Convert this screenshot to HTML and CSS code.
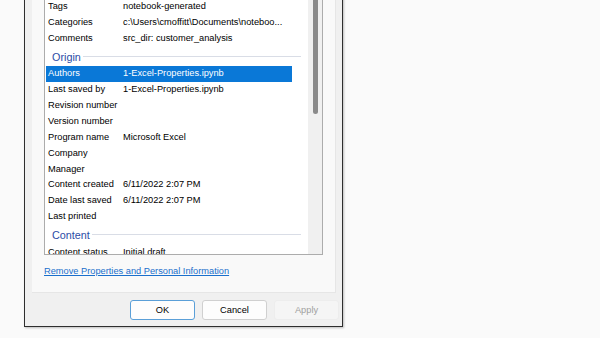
FILE: index.html
```html
<!DOCTYPE html>
<html>
<head>
<meta charset="utf-8">
<link rel="stylesheet" href="styles.css">
</head>
<body>
<div class="dialog">
  <div class="tabpage">
    <div class="listbox">
      <div class="list">
        <div class="row"><span class="label">Tags</span><span class="value">notebook-generated</span></div>
        <div class="row"><span class="label">Categories</span><span class="value">c:\Users\cmoffitt\Documents\noteboo...</span></div>
        <div class="row"><span class="label">Comments</span><span class="value">src_dir: customer_analysis</span></div>
        <div class="section"><span class="section-title">Origin</span><span class="section-line"></span></div>
        <div class="row selected"><span class="label">Authors</span><span class="value">1-Excel-Properties.ipynb</span></div>
        <div class="row"><span class="label">Last saved by</span><span class="value">1-Excel-Properties.ipynb</span></div>
        <div class="row"><span class="label">Revision number</span><span class="value"></span></div>
        <div class="row"><span class="label">Version number</span><span class="value"></span></div>
        <div class="row"><span class="label">Program name</span><span class="value">Microsoft Excel</span></div>
        <div class="row"><span class="label">Company</span><span class="value"></span></div>
        <div class="row"><span class="label">Manager</span><span class="value"></span></div>
        <div class="row"><span class="label">Content created</span><span class="value">6/11/2022 2:07 PM</span></div>
        <div class="row"><span class="label">Date last saved</span><span class="value">6/11/2022 2:07 PM</span></div>
        <div class="row"><span class="label">Last printed</span><span class="value"></span></div>
        <div class="section"><span class="section-title">Content</span><span class="section-line"></span></div>
        <div class="row"><span class="label">Content status</span><span class="value">Initial draft</span></div>
      </div>
      <div class="scrollbar"><div class="thumb"></div></div>
    </div>
    <a class="link" href="#">Remove Properties and Personal Information</a>
  </div>
  <div class="buttons">
    <button class="btn default">OK</button>
    <button class="btn">Cancel</button>
    <button class="btn disabled">Apply</button>
  </div>
</div>
</body>
</html>
```
FILE: styles.css
```css
html, body {
  margin: 0;
  padding: 0;
  width: 600px;
  height: 338px;
  overflow: hidden;
  background: #fafafa;
  font-family: "Liberation Sans", Arial, sans-serif;
  font-size: 9.25px;
  color: #000;
}

.dialog {
  margin: -2.9px 0 0 24px;
  width: 317px;
  background: #f0f0f0;
  border-left: 1px solid #2e2e2e;
  border-right: 1px solid #2e2e2e;
  border-bottom: 1px solid #2e2e2e;
  box-shadow: 1px 1px 2px rgba(0,0,0,0.25);
  display: flex;
  flex-direction: column;
}

.tabpage {
  margin-left: 7px;
  width: 279px;
  padding: 0 12px 15.5px 12px;
  background: #f9f9f9;
  border-right: 1px solid #e6e6e6;
  border-bottom: 1px solid #e6e6e6;
  display: flex;
  flex-direction: column;
}

.listbox {
  height: 255.4px;
  border: 1px solid #acacac;
  background: #fff;
  display: flex;
  overflow: hidden;
}

.list {
  flex: 1;
  display: flex;
  flex-direction: column;
  padding-top: 1px;
}

.row {
  height: 15.85px;
  line-height: 15.85px;
  margin: 0 16px 0 1px;
  display: grid;
  grid-template-columns: 77px 1fr;
  white-space: nowrap;
  flex-shrink: 0;
}

.row .label {
  padding-left: 2px;
}

.row.selected {
  background: #0a78d7;
  color: #fff;
}

.section {
  height: 19.8px;
  flex-shrink: 0;
  display: flex;
  align-items: center;
  padding: 1px 7px 0 7px;
  box-sizing: border-box;
}

.section-title {
  font-size: 10.8px;
  color: #2b4ca6;
}

.section-line {
  flex: 1;
  height: 1px;
  background: #d9dde6;
  margin-left: 2px;
  margin-top: -1px;
}

.scrollbar {
  width: 14px;
  background: #f0f0f0;
  display: flex;
  justify-content: center;
}

.thumb {
  width: 5px;
  height: 116px;
  background: #8a8a8a;
  border-radius: 0 0 3px 3px;
  margin-left: 1px;
}

.link {
  margin-top: 10px;
  line-height: 12px;
  color: #1a6fcc;
  text-decoration: underline;
  align-self: flex-start;
}

.buttons {
  display: flex;
  justify-content: flex-end;
  gap: 7px;
  padding: 7px 3px 6px 0;
}

.btn {
  width: 65px;
  height: 20px;
  box-sizing: border-box;
  font-family: "Liberation Sans", Arial, sans-serif;
  font-size: 9.25px;
  color: #000;
  background: #fdfdfd;
  border: 1px solid #d0d0d0;
  border-radius: 3px;
  padding: 0;
}

.btn.default {
  border-color: #5a9fd8;
}

.btn.disabled {
  background: #f5f5f5;
  border-color: #ededed;
  color: #a0a0a0;
}
```
